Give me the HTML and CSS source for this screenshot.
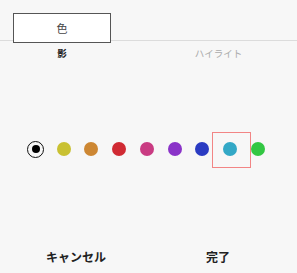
FILE: index.html
```html
<!DOCTYPE html>
<html lang="ja">
	<head>
		<meta charset="UTF-8" />
		<title>色</title>
		<link rel="stylesheet" href="styles.css">
	</head>
	<body>
		<div class="bar">
			<div class="chip">色</div>
		</div>

		<div class="tabs">
			<span class="tab active">影</span>
			<span class="tab">ハイライト</span>
		</div>

		<div class="swatches">
			<div class="slot"><span class="radio"></span></div>
			<div class="slot"><span class="dot" style="background:#c9c132"></span></div>
			<div class="slot"><span class="dot" style="background:#cd8733"></span></div>
			<div class="slot"><span class="dot" style="background:#d02a33"></span></div>
			<div class="slot"><span class="dot" style="background:#c93b82"></span></div>
			<div class="slot"><span class="dot" style="background:#8a33c8"></span></div>
			<div class="slot"><span class="dot" style="background:#2a3bc2"></span></div>
			<div class="slot selected"><span class="dot" style="background:#33a8c6"></span></div>
			<div class="slot"><span class="dot" style="background:#33c743"></span></div>
		</div>

		<div class="actions">
			<button>キャンセル</button>
			<button>完了</button>
		</div>
	</body>
</html>
```

FILE: styles.css
```css
body {
	margin: 0;
	width: 297px;
	height: 273px;
	background: #f7f7f7;
	font-family: "Noto Sans CJK JP", "Noto Sans", sans-serif;
	color: #333;
	overflow: hidden;
}
.bar {
	padding: 13px 0 0 13px;
	height: 27px;
	border-bottom: 1px solid #dcdcdc;
}
.chip {
	width: 98px;
	height: 30px;
	box-sizing: border-box;
	border: 1px solid #555;
	background: #fff;
	text-align: center;
	line-height: 28px;
	font-size: 11px;
	color: #444;
}
.tabs {
	display: grid;
	grid-template-columns: 98px 98px;
	column-gap: 58.5px;
	padding-left: 13px;
	height: 24px;
	line-height: 24px;
}
.tab {
	text-align: center;
	font-size: 9.5px;
	color: #aaa;
}
.tab.active {
	color: #222;
	font-weight: bold;
}
.swatches {
	display: flex;
	align-items: center;
	margin-top: 66px;
	padding-left: 22px;
	height: 36px;
}
.slot {
	position: relative;
	width: 27.75px;
	height: 36px;
	display: flex;
	align-items: center;
	justify-content: center;
}
.dot {
	width: 14px;
	height: 14px;
	border-radius: 50%;
}
.radio {
	width: 15px;
	height: 15px;
	border: 1px solid #111;
	border-radius: 50%;
	display: flex;
	align-items: center;
	justify-content: center;
}
.radio::after {
	content: "";
	width: 8px;
	height: 8px;
	border-radius: 50%;
	background: #000;
}
.selected::before {
	content: "";
	position: absolute;
	left: -4px;
	top: 1px;
	width: 39px;
	height: 36px;
	box-sizing: border-box;
	border: 1px solid #f28585;
}
.actions {
	display: grid;
	grid-template-columns: 98px 98px;
	column-gap: 44px;
	padding-left: 27px;
	margin-top: 77px;
}
.actions button {
	border: 0;
	background: none;
	padding: 0;
	height: 24px;
	font-family: inherit;
	font-size: 12px;
	font-weight: bold;
	color: #222;
}
```
